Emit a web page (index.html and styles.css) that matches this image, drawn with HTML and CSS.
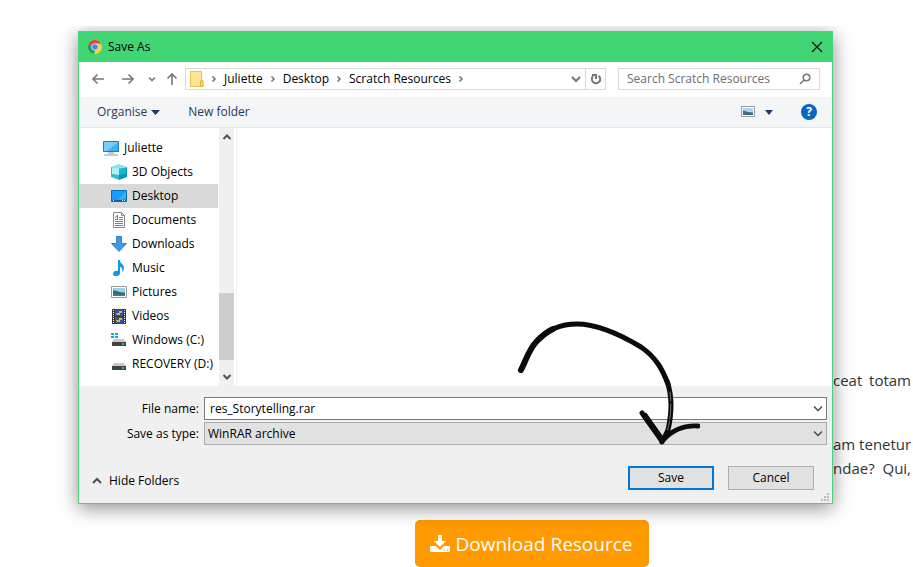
FILE: index.html
```html
<!DOCTYPE html>
<html lang="en">
<head>
<meta charset="utf-8">
<title>Save As</title>
<link rel="stylesheet" href="styles.css">
</head>
<body>
<main class="page">
  <section class="stage">
    <div class="dialog" role="dialog" aria-labelledby="title">
      <header class="titlebar">
        <svg class="i16" viewBox="0 0 16 16"><circle cx="8" cy="8" r="7" fill="#f9cf45"/><path d="M2 4.300A7 7 0 0 1 14 4.500H8L5 9.500Z" fill="#dc4b3e"/><path d="M2 4.300 5 9.500 8 11.500 7 15A7 7 0 0 1 2 4.300Z" fill="#1fa05c"/><circle cx="8" cy="8" r="3.600" fill="#e8efe8"/><circle cx="8" cy="8" r="2.800" fill="#4285f4"/></svg>
        <h1 id="title">Save As</h1>
        <button class="plain close" aria-label="Close"><svg width="12" height="12" viewBox="0 0 12 12"><path d="M1 1 11 11M11 1 1 11" stroke="#111" stroke-width="1.200"/></svg></button>
      </header>
      <nav class="address">
        <button class="plain back" aria-label="Back"><svg class="line" width="14" height="12" viewBox="0 0 14 12"><path d="M13 6H2M6.500 1.500 2 6l4.500 4.500"/></svg></button>
        <button class="plain forward" aria-label="Forward"><svg class="line" width="14" height="12" viewBox="0 0 14 12"><path d="M1 6h11M7.500 1.500 12 6l-4.500 4.500"/></svg></button>
        <button class="plain recent" aria-label="Recent"><svg class="line" width="8" height="6" viewBox="0 0 8 6"><path d="M1 1.500 4 4.500 7 1.500"/></svg></button>
        <button class="plain up" aria-label="Up"><svg class="line" width="12" height="14" viewBox="0 0 12 14"><path d="M6 13V2M1.500 6.500 6 2l4.500 4.500"/></svg></button>
        <div class="crumbs">
          <svg class="folder" width="14" height="16" viewBox="0 0 14 16"><path d="M.5.500h11v9h1.500v6H.500Z" fill="#ffe593" stroke="#e8c35a"/><path d="M10.500 15V10h2.500v5Z" fill="#ffe593" stroke="#e0b030"/></svg>
          <svg class="line sep" width="6" height="8" viewBox="0 0 6 8"><path d="M1.500 1.500 4 4 1.500 6.500"/></svg>
          <a href="#juliette">Juliette</a>
          <svg class="line sep" width="6" height="8" viewBox="0 0 6 8"><path d="M1.500 1.500 4 4 1.500 6.500"/></svg>
          <a href="#desktop">Desktop</a>
          <svg class="line sep" width="6" height="8" viewBox="0 0 6 8"><path d="M1.500 1.500 4 4 1.500 6.500"/></svg>
          <a href="#scratch">Scratch Resources</a>
          <svg class="line sep" width="6" height="8" viewBox="0 0 6 8"><path d="M1.500 1.500 4 4 1.500 6.500"/></svg>
          <button class="plain history" aria-label="Previous locations"><svg class="line bold" width="10" height="8" viewBox="0 0 10 8"><path d="M1 2 5 6 9 2"/></svg></button>
          <button class="plain refresh" aria-label="Refresh"><svg class="line bold" width="12" height="12" viewBox="0 0 12 12"><path d="M8.500 2.700A4.200 4.200 0 1 1 3 3.200"/><path d="M2 2h4v4"/></svg></button>
        </div>
        <label class="search">
          <input type="search" placeholder="Search Scratch Resources" aria-label="Search Scratch Resources">
          <svg class="line" width="12" height="12" viewBox="0 0 12 12"><circle cx="7.500" cy="4.500" r="3.300"/><path d="M5 7 1 11"/></svg>
        </label>
      </nav>
      <div class="toolbar">
        <button class="plain organise">Organise <svg width="9" height="5" viewBox="0 0 9 5"><path d="M0 0h9L4.500 5Z" fill="#1e3a68"/></svg></button>
        <button class="plain">New folder</button>
        <button class="plain view" aria-label="Change view"><svg width="14" height="12" viewBox="0 0 14 12"><path d="M.5.500h13v10H.500Z" fill="#fff" stroke="#999"/><path d="M2 2h10v7H2Z" fill="#a9d2f5"/><path d="M2 4.500 7 6l5 .5V9H2Z" fill="#3c7461"/><path d="M2 8h10v1H2Z" fill="#2d68b0"/></svg><svg width="8" height="5" viewBox="0 0 8 5"><path d="M0 0h8L4 5Z" fill="#1e3a68"/></svg></button>
        <button class="plain help" aria-label="Help">?</button>
      </div>
      <div class="browser">
        <ul class="tree">
          <li class="root"><a href="#juliette"><svg class="i16" viewBox="0 0 16 16"><path d="M.5 1.500h15v10H.500Z" fill="#42b0f6" stroke="#287aa8"/><path d="M1 2h14L4 11H1Z" fill="#7accfb"/><path d="M5 13h6M1 15h14" stroke="#8294a2"/></svg>Juliette</a></li>
          <li><a href="#objects"><svg class="i16" viewBox="0 0 16 16"><path d="M0 3 8 0l8 3-8 3Z" fill="#8be1e6"/><path d="M0 3 8 6v10L0 13Z" fill="#35b8c8"/><path d="M8 6 16 3v10l-8 3Z" fill="#0894b5"/><path d="M1 4 8 4.500V11L1 10Z" fill="#b4eef0"/><path d="M8 4.500 15 4v6l-7 1Z" fill="#18b5d2"/></svg>3D Objects</a></li>
          <li class="current"><a href="#desktop"><svg class="i16" viewBox="0 0 16 16"><path d="M.5 2.500h15v11H.500Z" fill="#199bfa" stroke="#096ab8"/><path d="M15 3v7L7 12.500Z" fill="#37b0ff"/><path d="M1 12.500h14" stroke="#12599c"/><path d="M2 12.500h2m7 0h3" stroke="#fff" stroke-dasharray="1 1"/></svg>Desktop</a></li>
          <li><a href="#documents"><svg class="i16" viewBox="0 0 16 16"><path d="M2.500.500h8l3 3v12h-11Z" fill="#fff" stroke="#888"/><path d="M10.500.500v3h3" fill="none" stroke="#888"/><path d="M4 9.500h8M4 11.500h8M4 13.500h8M8 5.500h4M8 7.500h4" stroke="#5e87a5"/><path d="M4 7.500h3M6.500 3v5M4 6 6.500 3" stroke="#2c8fd0" fill="none"/></svg>Documents</a></li>
          <li><a href="#downloads"><svg class="i16" viewBox="0 0 16 16"><path d="M5.500.500h5v7h5L8 15.500.500 7.500h5Z" fill="#3f98e8" stroke="#3281cb"/></svg>Downloads</a></li>
          <li><a href="#music"><svg class="i16" viewBox="0 0 16 16"><path d="M7 0h2c0 4 4 4 4 8 0 2-1 3-2 4 1-4-1-5-2-5v6c0 4-7 4-7 1 0-3 3-3.500 5-3Z" fill="#1496e8"/></svg>Music</a></li>
          <li><a href="#pictures"><svg class="i16" viewBox="0 0 16 16"><path d="M.5 2.500h15v11H.500Z" fill="#fff" stroke="#999"/><path d="M2 4h12v8H2Z" fill="#9fcdf4"/><path d="M2 6.500C5 6 8 8.500 14 8.500V12H2Z" fill="#356e68"/><path d="M2 10.500h12V12H2Z" fill="#3879b5"/></svg>Pictures</a></li>
          <li><a href="#videos"><svg class="i16" viewBox="0 0 16 16"><path d="M1 1h14v15H1Z" fill="#343434"/><path d="M4 1.500h8V8H4Zm0 7.500h8v6.500H4Z" fill="#2858ae"/><path d="M5 5h3V3h3v2H9v2H6Zm0 7h3v-2h3v2H9v2H6Z" fill="#e5b329"/><path d="M2.500 2v14M13.500 2v14" stroke="#fff" stroke-dasharray="1 1"/></svg>Videos</a></li>
          <li><a href="#c"><svg class="i16" viewBox="0 0 16 16"><path d="M0 1h3v2H0Zm4 0h3v2H4ZM0 4h3v2H0Zm4 0h3v2H4Z" fill="#12a5f4"/><path d="M3 7h10l2 3H1Z" fill="#c9c9c9"/><path d="M1 10h14v4H1Z" fill="#3f4342"/><path d="M11 12h2" stroke="#40ed60" stroke-width="1.500"/></svg>Windows (C:)</a></li>
          <li><a href="#d"><svg class="i16" viewBox="0 0 16 16"><path d="M3 7h10l2 3H1Z" fill="#c9c9c9"/><path d="M1 10h14v4H1Z" fill="#3f4342"/><path d="M11 12h2" stroke="#40ed60" stroke-width="1.500"/></svg>RECOVERY (D:)</a></li>
        </ul>
        <div class="scroll">
          <svg class="line dark" width="10" height="8" viewBox="0 0 10 8"><path d="M1.500 6 5 2.500 8.500 6"/></svg>
          <div class="thumb"></div>
          <svg class="line dark" width="10" height="8" viewBox="0 0 10 8"><path d="M1.500 2 5 5.500 8.500 2"/></svg>
        </div>
        <div class="files"></div>
      </div>
      <form class="details">
        <label for="name">File name:</label>
        <div class="field"><input id="name" type="text" value="res_Storytelling.rar"><svg class="chev" width="10" height="6" viewBox="0 0 10 6"><path d="M1 .5 5 4.500 9 .5"/></svg></div>
        <label for="type">Save as type:</label>
        <div class="field"><select id="type"><option>WinRAR archive</option></select><svg class="chev" width="10" height="6" viewBox="0 0 10 6"><path d="M1 .5 5 4.500 9 .5"/></svg></div>
      </form>
      <footer class="actions">
        <button class="plain hide"><svg class="line dark" width="10" height="8" viewBox="0 0 10 8"><path d="M1 6 5 2 9 6"/></svg>Hide Folders</button>
        <button class="push primary">Save</button>
        <button class="push">Cancel</button>
      </footer>
      <svg class="grip" width="8" height="8" viewBox="0 0 8 8"><path d="M6 0h2v2H6ZM3 3h2v2H3Zm3 0h2v2H6ZM0 6h2v2H0Zm3 0h2v2H3Zm3 0h2v2H6Z" fill="#bdbdbd"/></svg>
      <svg class="arrow" width="190" height="130" viewBox="0 0 190 130">
        <g fill="none" stroke="#0b0b0b" stroke-linecap="round" stroke-linejoin="round">
          <path d="M11 54C17 42 19 33 27 25C37 14 50 8 67 8C89 8 111 19 131 31C147 42 153 55 158 68" stroke-width="5"/>
          <path d="M11 54C17 42 19 33 27 25C32 20 36 16 43 13" stroke-width="6"/>
          <path d="M157 65C163 82 161 101 158 114L152 126" stroke-width="5"/>
          <path d="M132 97 152 125C163 113 174 109 188 110" stroke-width="5"/>
          <path d="M135 100 152 124" stroke-width="6"/>
          <path d="M160 76C162 91 160 106 157 116" stroke="#777" stroke-width="1" stroke-dasharray="9 3 15 2"/>
        </g>
      </svg>
    </div>
  </section>
  <article class="copy">
    <p>ceat totam</p>
    <p>am tenetur<br>ndae? Qui,</p>
  </article>
  <button class="download"><svg width="20" height="20" viewBox="0 0 20 20"><path d="M8 1h4v6h4l-6 6-6-6h4Z" fill="#fff"/><path d="M1 12h5l4 4 4-4h5q1 0 1 1v4q0 1-1 1H1q-1 0-1-1v-4q0-1 1-1Z" fill="#fff"/><path d="M14 16h1m2 0h1" stroke="#ff9a00"/></svg>Download Resource</button>
</main>
</body>
</html>
```
FILE: styles.css
```css
* { box-sizing: border-box; }
body {
  margin: 0;
  background: #fff;
  color: #000;
  font: 12px/16px "Open Sans", "Noto Sans", sans-serif;
}
button, input, select { font: inherit; color: inherit; }
svg { display: block; flex: none; }
a { color: inherit; text-decoration: none; }
.plain {
  display: flex;
  align-items: center;
  padding: 0;
  border: 0;
  background: none;
}
.i16 { width: 16px; height: 16px; }
.line { fill: none; stroke: #777; stroke-width: 1.6; }
.line.bold { stroke-width: 2; }
.line.dark { stroke: #505050; stroke-width: 2; }

.page {
  display: grid;
  grid-template-columns: 78px 1fr 80px;
  padding-top: 26px;
}
.stage {
  grid-area: 1 / 2;
  position: relative;
  z-index: 1;
  padding-top: 5px;
  clip-path: inset(0 -30px -30px -30px);
}
.dialog {
  position: relative;
  border: 1px solid #50d080;
  background: #f0f0f0;
  box-shadow: 0 4px 18px rgba(0, 0, 0, .45);
}
.titlebar {
  display: flex;
  align-items: center;
  gap: 5px;
  height: 30px;
  padding: 0 9px 0 8px;
  background: #42d574;
}
.titlebar h1 { margin: 0; font-size: 12px; font-weight: 400; }
.close { margin-left: auto; }

.address {
  display: flex;
  align-items: center;
  height: 35px;
  padding: 0 12px 1px;
  background: #fff;
}
.forward { margin-left: 16px; }
.recent { margin-left: 13px; }
.up { margin-left: 10px; }
.crumbs {
  display: flex;
  align-items: center;
  flex: 1;
  height: 22px;
  margin-left: 7px;
  padding-left: 4px;
  border: 1px solid #d9d9d9;
}
.sep { margin: 0 7px; }
.history { margin-left: auto; }
.refresh {
  justify-content: center;
  width: 20px;
  height: 20px;
  margin-left: 4px;
  border-left: 1px solid #d9d9d9;
}
.search {
  display: flex;
  align-items: center;
  width: 202px;
  height: 22px;
  margin-left: 12px;
  padding: 0 8px;
  border: 1px solid #d9d9d9;
}
.search input {
  flex: 1;
  min-width: 0;
  padding: 0;
  border: 0;
  outline: 0;
  background: none;
}
.search input::placeholder { color: #6d6d6d; }

.toolbar {
  display: flex;
  align-items: center;
  gap: 28px;
  height: 31px;
  padding: 0 15px 0 18px;
  border-bottom: 1px solid #e6e6e6;
  background: #f4f5f7;
  color: #1e395b;
}
.organise { gap: 4px; }
.view { gap: 10px; margin-left: auto; }
.help {
  justify-content: center;
  width: 16px;
  height: 16px;
  border-radius: 50%;
  background: #0a66c2;
  color: #fff;
  font-weight: 700;
}

.browser { display: flex; background: #fff; }
.tree {
  width: 140px;
  margin: 0;
  padding: 8px 0 10px;
  list-style: none;
}
.tree a {
  display: flex;
  align-items: center;
  gap: 5px;
  height: 24px;
  margin-right: 1px;
  padding-left: 32px;
  white-space: nowrap;
}
.tree .root a { padding-left: 24px; }
.tree .current a { background: #d9d9d9; }
.scroll {
  display: flex;
  flex-direction: column;
  align-items: center;
  width: 15px;
  padding: 5px 0;
  background: #f0f0f0;
}
.thumb { width: 100%; height: 67px; margin: auto 0 13px; background: #cdcdcd; }
.files { flex: 1; margin-left: 2px; border-left: 1px solid #f3f3f3; }

.details {
  display: grid;
  grid-template-columns: 120px 1fr;
  gap: 2px 5px;
  align-items: center;
  padding: 11px 5px 0 0;
}
.details label { text-align: right; }
.field { position: relative; }
.field input, .field select {
  display: block;
  width: 100%;
  height: 23px;
  padding: 0 24px 0 5px;
  border: 1px solid #7a7a7a;
  border-radius: 0;
  outline: 0;
  background: #fff;
  appearance: none;
}
.field select { padding-left: 3px; border-color: #adadad; background: #e1e1e1; }
.chev {
  position: absolute;
  top: 9px;
  right: 4px;
  fill: none;
  stroke: #444;
  stroke-width: 1.3;
  pointer-events: none;
}
.actions {
  display: flex;
  align-items: center;
  gap: 14px;
  padding: 21px 18px 13px 13px;
}
.hide { gap: 7px; margin-right: auto; padding-top: 6px; }
.push {
  width: 86px;
  height: 24px;
  padding: 0;
  border: 1px solid #adadad;
  background: #e1e1e1;
}
.primary { border: 2px solid #0078d7; }
.grip { position: absolute; right: 3px; bottom: 2px; }
.arrow { position: absolute; right: 132px; bottom: 57px; pointer-events: none; }

.copy {
  grid-area: 1 / 3;
  padding: 342px 2px 0 0;
  color: #333;
  font-size: 15px;
  line-height: 24px;
  text-align: justify;
  text-align-last: justify;
}
.copy p { margin: 0 0 40px; white-space: nowrap; }
.copy p:last-child { margin-bottom: 0; }
.download {
  grid-area: 2 / 2;
  display: flex;
  align-items: center;
  justify-content: center;
  gap: 5px;
  justify-self: center;
  width: 234px;
  height: 47px;
  margin: 16px 0 0 152px;
  padding: 0;
  border: 0;
  border-radius: 5px;
  background: #ff9a00;
  color: #fff;
  font-size: 19px;
}
```
